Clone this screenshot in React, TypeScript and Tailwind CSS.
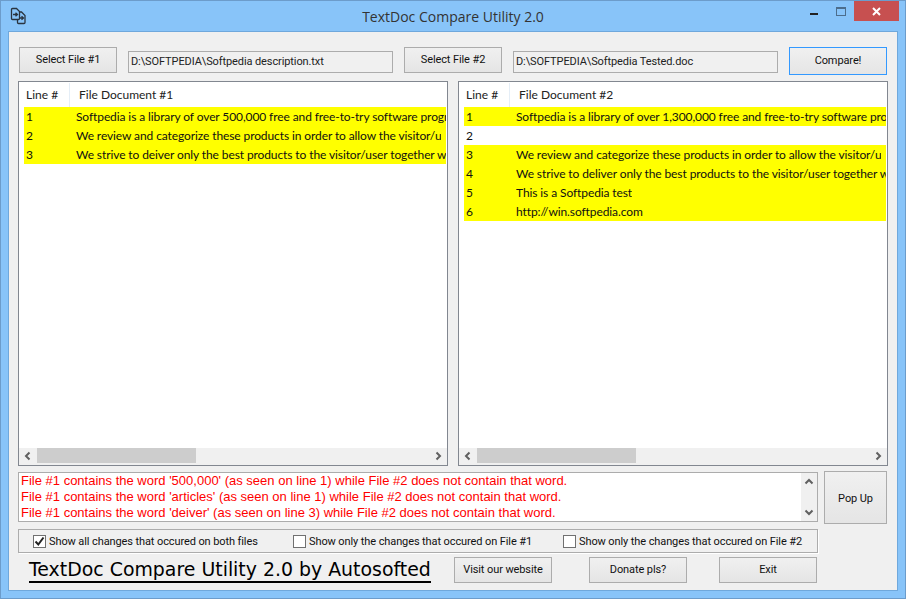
import { ReactNode } from 'react';

const uiFont = "font-['Roboto',sans-serif] text-[11px] tracking-[-0.1px]";
const winButton = `h-[26px] w-[98px] shrink-0 border border-[#acacac] bg-gradient-to-b from-[#f0f0f0] to-[#e5e5e5] pt-px text-[#111] ${uiFont}`;
const fieldBox = `mt-[4px] flex h-[22px] w-[265px] shrink-0 items-center border border-[#acacac] bg-[#f0f0f0] pl-[2px] text-[#222] ${uiFont}`;
const rowFont = "font-['Lato',sans-serif] text-[12px]";

type Row = { n: number; text: string; hit: boolean };

// the lines run past the list's edge in the screenshot, so only the visible part is kept
const leftRows: Row[] = [
  { n: 1, text: 'Softpedia is a library of over 500,000 free and free-to-try software progr', hit: true },
  { n: 2, text: 'We review and categorize these products in order to allow the visitor/u', hit: true },
  { n: 3, text: 'We strive to deiver only the best products to the visitor/user together w', hit: true },
];

const rightRows: Row[] = [
  { n: 1, text: 'Softpedia is a library of over 1,300,000 free and free-to-try software pro', hit: true },
  { n: 2, text: '', hit: false },
  { n: 3, text: 'We review and categorize these products in order to allow the visitor/u', hit: true },
  { n: 4, text: 'We strive to deliver only the best products to the visitor/user together w', hit: true },
  { n: 5, text: 'This is a Softpedia test', hit: true },
  { n: 6, text: 'http://win.softpedia.com', hit: true },
];

const logLines = [
  "File #1 contains the word '500,000' (as seen on line 1) while File #2 does not contain that word.",
  "File #1 contains the word 'articles' (as seen on line 1) while File #2 does not contain that word.",
  "File #1 contains the word 'deiver' (as seen on line 3) while File #2 does not contain that word.",
];

function Chevron({ d }: { d: string }) {
  return (
    <svg width="10" height="10" viewBox="0 0 10 10" className="shrink-0">
      <path d={d} fill="none" stroke="#606060" strokeWidth="2" />
    </svg>
  );
}

function FileList({ title, rows }: { title: string; rows: Row[] }) {
  return (
    <div className="flex h-[385px] w-[430px] shrink-0 flex-col border border-[#828790] bg-white">
      <div className={`flex h-[25px] shrink-0 items-center pt-px text-[#222] ${rowFont}`}>
        <div className="flex h-full w-[51px] items-center border-r border-[#e5eef7] pl-[7px]">Line #</div>
        <div className="pl-[9px]">{title}</div>
      </div>
      <div className="min-h-0 flex-1 overflow-hidden pl-[5px] pr-px">
        {rows.map((r) => (
          <div key={r.n} className={`flex h-[19px] items-center whitespace-nowrap pt-px tracking-[-0.1px] text-[#111] ${rowFont} ${r.hit ? 'bg-[#ffff00]' : ''}`}>
            <span className="w-[52px] shrink-0 pl-[2px]">{r.n}</span>
            <span className="min-w-0 overflow-hidden">{r.text}</span>
          </div>
        ))}
      </div>
      <div className="flex h-[17px] shrink-0 items-start bg-[#f0f0f0]">
        <div className="flex h-[15px] w-[18px] shrink-0 items-center justify-center"><Chevron d="M6.5 1.5 3 5l3.5 3.5" /></div>
        <div className="h-[15px] w-[159px] bg-[#cdcdcd]" />
        <div className="flex-1" />
        <div className="flex h-[15px] w-[18px] shrink-0 items-center justify-center"><Chevron d="M3.5 1.5 7 5 3.5 8.5" /></div>
      </div>
    </div>
  );
}

function Check({ checked, width, children }: { checked?: boolean; width: string; children: ReactNode }) {
  return (
    <div className={`flex shrink-0 items-center gap-[3px] ${width}`}>
      <div className="flex h-[13px] w-[13px] shrink-0 items-center justify-center border border-[#707070] bg-white">
        {checked && (
          <svg width="11" height="11" viewBox="0 0 11 11">
            <path d="M1.5 5.5 4.3 8.5 9.5 1.5" fill="none" stroke="#222" strokeWidth="2" />
          </svg>
        )}
      </div>
      <span className={`whitespace-nowrap pt-[2px] text-[#111] ${uiFont}`}>{children}</span>
    </div>
  );
}

export default function App() {
  return (
    <div className="flex h-[599px] w-[906px] flex-col border border-[#6c9ccb] bg-[#88c4f9]">
      <div className="grid h-[30px] shrink-0 grid-cols-[1fr_auto_1fr]">
        <div className="pl-[9px] pt-[6px]">
          <svg width="18" height="18" viewBox="0 0 18 18" fill="none" stroke="#2a3440" strokeWidth="1.3">
            <path d="M1.5 2.5a1 1 0 0 1 1-1h4l3 3v7a1 1 0 0 1-1 1h-6a1 1 0 0 1-1-1z" />
            <path d="M9.5 5h2l3.5 3.5v7a1 1 0 0 1-1 1H8.500a1 1 0 0 1-1-1v-3" />
            <path d="M3 7.500h4M5.500 5.800l2 1.700-2 1.700M9 11h4M11.500 9.300l2 1.700-2 1.700" />
          </svg>
        </div>
        <div className="pt-[5px] text-[14px] text-[#333] font-['Open_Sans',sans-serif]">TextDoc Compare Utility 2.0</div>
        <div className="flex justify-end pr-[6px]">
          <div className="mr-[8px] mt-[6px] h-[9px] w-[10px] border border-t-2 border-[#4c6d8c]" />
          <div className="order-first mr-[18px] mt-[12px] h-[2px] w-[8px] bg-[#222]" />
          <div className="flex h-[20px] w-[45px] items-center justify-center bg-[#c75050]">
            <svg width="9" height="9" viewBox="0 0 9 9">
              <path d="M1 1l7 7M8 1 1 8" stroke="#fff" strokeWidth="2" />
            </svg>
          </div>
        </div>
      </div>

      <div className="mx-[7px] mb-[7px] flex min-h-0 flex-1 flex-col border border-[#6fa8dc] bg-[#f0f0f0] pl-[9px] pt-[15px]">
        <div className="flex shrink-0 items-start pl-px">
          <button className={winButton}>Select File #1</button>
          <div className={`ml-[11px] ${fieldBox}`}>D:\SOFTPEDIA\Softpedia description.txt</div>
          <button className={`ml-[11px] ${winButton}`}>Select File #2</button>
          <div className={`ml-[11px] ${fieldBox}`}>D:\SOFTPEDIA\Softpedia Tested.doc</div>
          <button className={`ml-[11px] !h-[28px] !border-[#3399ff] ${winButton}`}>Compare!</button>
        </div>

        <div className="mt-[6px] flex shrink-0 gap-[10px]">
          <FileList title="File Document #1" rows={leftRows} />
          <FileList title="File Document #2" rows={rightRows} />
        </div>

        <div className="mt-[5px] flex shrink-0 items-start">
          <div className="mt-px flex h-[50px] w-[800px] border border-[#acacac] bg-white">
            <div className="min-w-0 flex-1 overflow-hidden pl-[2px] text-[13px] leading-[16px] text-[#ff0000] font-['Liberation_Sans',sans-serif]">
              {logLines.map((l) => (
                <div key={l} className="whitespace-nowrap">{l}</div>
              ))}
            </div>
            <div className="flex w-[16px] shrink-0 flex-col items-center justify-between bg-[#f0f0f0] py-[4px]">
              <Chevron d="M1.5 6.5 5 3l3.5 3.5" />
              <Chevron d="M1.5 3.5 5 7l3.5-3.5" />
            </div>
          </div>
          <button className={`ml-[6px] h-[53px] w-[63px] border border-[#acacac] bg-gradient-to-b from-[#f0f0f0] to-[#e5e5e5] pt-[3px] text-[#111] ${uiFont}`}>Pop Up</button>
        </div>

        <div className="mt-[5px] flex h-[24px] w-[800px] shrink-0 items-center border border-[#acacac] pl-[14px] shadow-[1px_1px_0_#fff]">
          <Check checked width="w-[260px]">Show all changes that occured on both files</Check>
          <Check width="w-[270px]">Show only the changes that occured on File #1</Check>
          <Check width="w-[254px]">Show only the changes that occured on File #2</Check>
        </div>

        <div className="mt-[4px] flex shrink-0 items-start">
          <div className="ml-[11px] w-[425px] shrink-0">
            <span className="inline-block whitespace-nowrap border-b-2 border-black text-[18.9px] leading-[24px] text-black font-['DejaVu_Sans',sans-serif]">TextDoc Compare Utility 2.0 by Autosofted</span>
          </div>
          <button className={winButton}>Visit our website</button>
          <button className={`ml-[37px] ${winButton}`}>Donate pls?</button>
          <button className={`ml-[32px] ${winButton}`}>Exit</button>
        </div>
      </div>
    </div>
  );
}
